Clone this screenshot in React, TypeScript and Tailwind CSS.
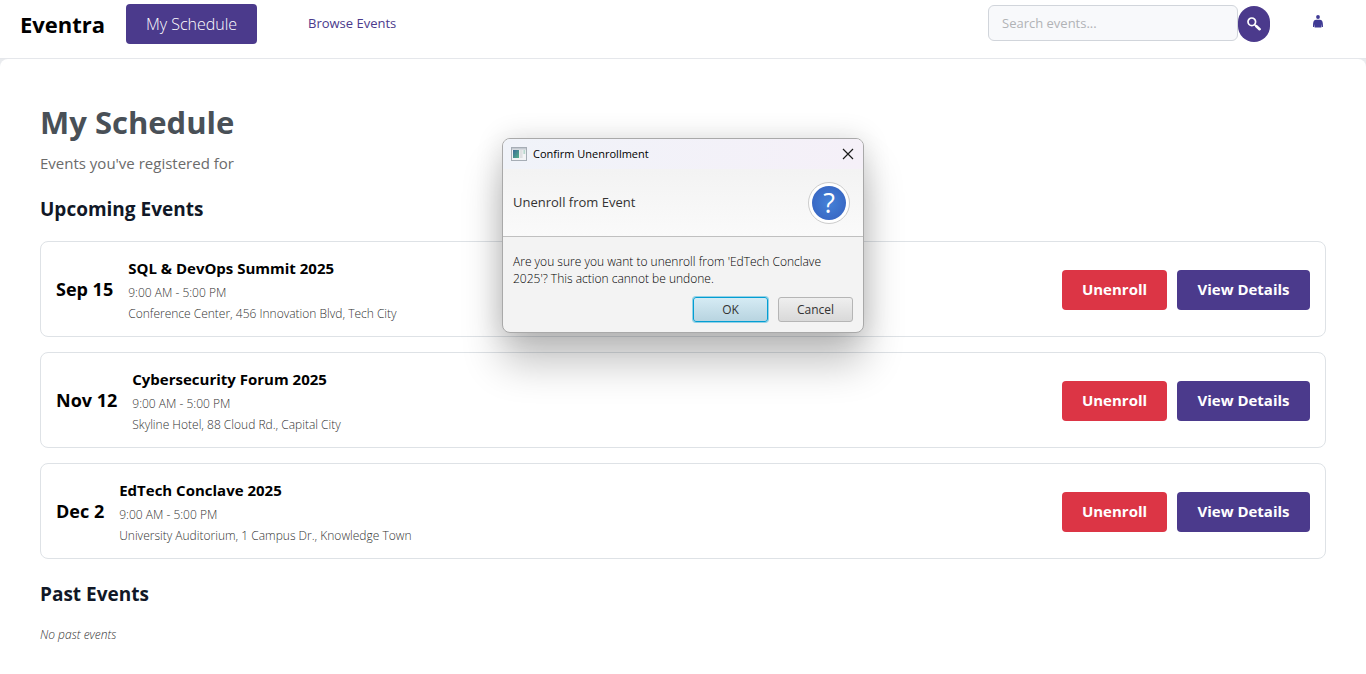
import type { ReactNode } from "react";

type ScheduledEvent = { date: string; title: string; time: string; place: string };

const upcoming: ScheduledEvent[] = [
  { date: "Sep 15", title: "SQL & DevOps Summit 2025", time: "9:00 AM - 5:00 PM", place: "Conference Center, 456 Innovation Blvd, Tech City" },
  { date: "Nov 12", title: "Cybersecurity Forum 2025", time: "9:00 AM - 5:00 PM", place: "Skyline Hotel, 88 Cloud Rd., Capital City" },
  { date: "Dec 2", title: "EdTech Conclave 2025", time: "9:00 AM - 5:00 PM", place: "University Auditorium, 1 Campus Dr., Knowledge Town" },
];

function SearchIcon() {
  return (
    <svg viewBox="0 0 14 14" className="h-[14px] w-[14px]" fill="none" stroke="#ffffff" aria-hidden="true">
      <circle cx="4.8" cy="4.8" r="3.8" strokeWidth="1.7" />
      <path d="M7.6 7.6 L9.2 9.2" strokeWidth="1.6" />
      <path d="M9.4 9.2 L12.6 12.2" strokeWidth="2.6" strokeLinecap="round" />
    </svg>
  );
}

function PersonIcon() {
  return (
    <svg viewBox="0 0 10 13" className="h-[13px] w-[10px]" fill="#3f3a94" aria-hidden="true">
      <circle cx="5" cy="2" r="1.9" />
      <path d="M3 4.8 H7 C9.4 5 10 7 10 12 H8.9 L8.4 9 V12.4 H1.6 V9 L1.1 12 H0 C0 7 .6 5 3 4.8Z" />
    </svg>
  );
}

function Header() {
  return (
    <header className="flex h-[59px] items-start border-b border-[#e5e7eb] bg-white pl-5 pr-[43px]">
      <span className="mt-2 w-[106px] text-[22px] leading-8 font-bold text-black">Eventra</span>
      <nav className="mt-1 flex items-center gap-[51px]">
        <button type="button" className="h-10 w-[131px] rounded bg-[#4b3a8c] text-base font-light text-white">My Schedule</button>
        <a href="#browse" className="text-[13px] text-[#4b3a8c]">Browse Events</a>
      </nav>
      <form className="mt-[5px] ml-auto flex items-start">
        <input
          type="search"
          aria-label="Search events"
          placeholder="Search events..."
          className="h-9 w-[250px] rounded-md border border-[#d1d5db] bg-[#f8f9fb] px-[13px] text-[13px] placeholder:text-[#b1b3b6]"
        />
        <button type="button" aria-label="Search" className="mt-px flex h-9 w-8 items-center justify-center rounded-[16px] bg-[#4b3a8c]">
          <SearchIcon />
        </button>
      </form>
      <button type="button" aria-label="Profile" className="mt-[15px] ml-[43px]">
        <PersonIcon />
      </button>
    </header>
  );
}

function EventCard({ event }: { event: ScheduledEvent }) {
  return (
    <li className="flex h-24 items-center rounded-lg border border-[#dee2e6] bg-white px-[15px]">
      <span className="text-lg font-bold text-black">{event.date}</span>
      <div className="ml-[15px]">
        <h3 className="text-[15px] leading-6 font-bold text-black">{event.title}</h3>
        <p className="mt-1 text-xs leading-[17px] font-light text-[#333333]">{event.time}</p>
        <p className="mt-1 text-xs leading-[17px] font-light text-[#333333]">{event.place}</p>
      </div>
      <div className="mt-px ml-auto flex gap-[10px]">
        <button type="button" className="h-10 w-[105px] rounded bg-[#dc3545] text-[15px] font-bold text-white">Unenroll</button>
        <button type="button" className="h-10 w-[133px] rounded bg-[#4b3a8c] text-[15px] font-bold text-white">View Details</button>
      </div>
    </li>
  );
}

function SectionTitle({ children }: { children: ReactNode }) {
  return <h2 className="text-[19px] leading-7 font-bold text-[#111827]">{children}</h2>;
}

function WindowIcon() {
  return (
    <svg viewBox="0 0 16 14" className="h-[14px] w-4" aria-hidden="true">
      <defs>
        <linearGradient id="pane" x1="0" y1="0" x2="1" y2="1">
          <stop offset="0" stopColor="#386a96" />
          <stop offset="1" stopColor="#55b18b" />
        </linearGradient>
      </defs>
      <rect x=".5" y=".5" width="15" height="13" fill="#f3f4f6" stroke="#a6adb5" />
      <rect x="1" y="1" width="14" height="1.6" fill="#c3c9d0" />
      <rect x="2" y="3" width="6" height="8" fill="url(#pane)" />
      <rect x="8.6" y="3" width="3" height="8" fill="#dfe0e2" />
      <rect x="12.4" y="3" width="1.8" height="4" fill="#b8d8cd" />
    </svg>
  );
}

function QuestionIcon() {
  return (
    <span className="flex h-[42px] w-[42px] items-center justify-center rounded-full border border-[#cccccc] bg-white">
      <span className="flex h-[34px] w-[34px] items-center justify-center rounded-full bg-radial from-[#4582d8] to-[#355fbd] text-[27px] leading-none text-white">?</span>
    </span>
  );
}

function ConfirmDialog() {
  return (
    <section
      role="dialog"
      aria-labelledby="dialog-title"
      className="absolute top-[138px] left-1/2 w-[362px] -translate-x-1/2 overflow-hidden rounded-lg border border-[#a9a9a9] bg-[#f3f3f3] text-[#333333] shadow-[0_30px_40px_rgba(0,0,0,0.24),0_0_28px_rgba(0,0,0,0.14)]"
    >
      <div className="flex h-[30px] items-center bg-linear-to-r from-[#f0f3f9] to-[#f5f0f8] pr-[9px] pl-2">
        <WindowIcon />
        <h2 id="dialog-title" className="ml-[6px] text-[11px] text-black">Confirm Unenrollment</h2>
        <button type="button" aria-label="Close" className="ml-auto">
          <svg viewBox="0 0 12 12" className="h-3 w-3" stroke="#1a1a1a" strokeWidth="1.2" aria-hidden="true">
            <path d="M1 1 L11 11 M11 1 L1 11" />
          </svg>
        </button>
      </div>
      <div className="flex h-[68px] items-center justify-between border-b border-[#c0c0c0] bg-linear-to-b from-[#f3f3f3] to-[#fafafa] pr-[13px] pl-[10px]">
        <p className="text-[13px]">Unenroll from Event</p>
        <QuestionIcon />
      </div>
      <p className="px-[10px] pt-4 text-xs leading-[17px] font-light text-black">
        Are you sure you want to unenroll from 'EdTech Conclave 2025'? This action cannot be undone.
      </p>
      <div className="flex justify-end gap-[10px] px-[10px] pt-[10px] pb-[10px]">
        <button type="button" className="h-[25px] w-[75px] rounded-[3px] border border-[#039ed3] bg-linear-to-b from-[#d5ebf4] to-[#b8d4e0] text-xs ring-1 ring-[#039ed3]/40">OK</button>
        <button type="button" className="h-[25px] w-[75px] rounded-[3px] border border-[#b5b5b5] bg-linear-to-b from-[#efefef] to-[#d9d9d9] text-xs">Cancel</button>
      </div>
    </section>
  );
}

export default function App() {
  return (
    <div className="relative min-h-screen bg-[#e9ebee] font-['Open_Sans','Noto_Sans',sans-serif]">
      <Header />
      <main className="min-h-[calc(100vh-59px)] rounded-t-lg bg-white px-10 pt-10">
        <h1 className="text-[31px] leading-[46px] font-bold text-[#495057]">My Schedule</h1>
        <p className="mt-[6px] text-[15px] leading-6 text-[#6b6b6b]">Events you've registered for</p>
        <section className="mt-5">
          <SectionTitle>Upcoming Events</SectionTitle>
          <ul className="mt-[18px] flex flex-col gap-[15px]">
            {upcoming.map((event) => (
              <EventCard key={event.title} event={event} />
            ))}
          </ul>
        </section>
        <section className="mt-[21px]">
          <SectionTitle>Past Events</SectionTitle>
          <p className="mt-[18px] text-xs leading-[17px] font-light text-[#333333] italic">No past events</p>
        </section>
      </main>
      <ConfirmDialog />
    </div>
  );
}
